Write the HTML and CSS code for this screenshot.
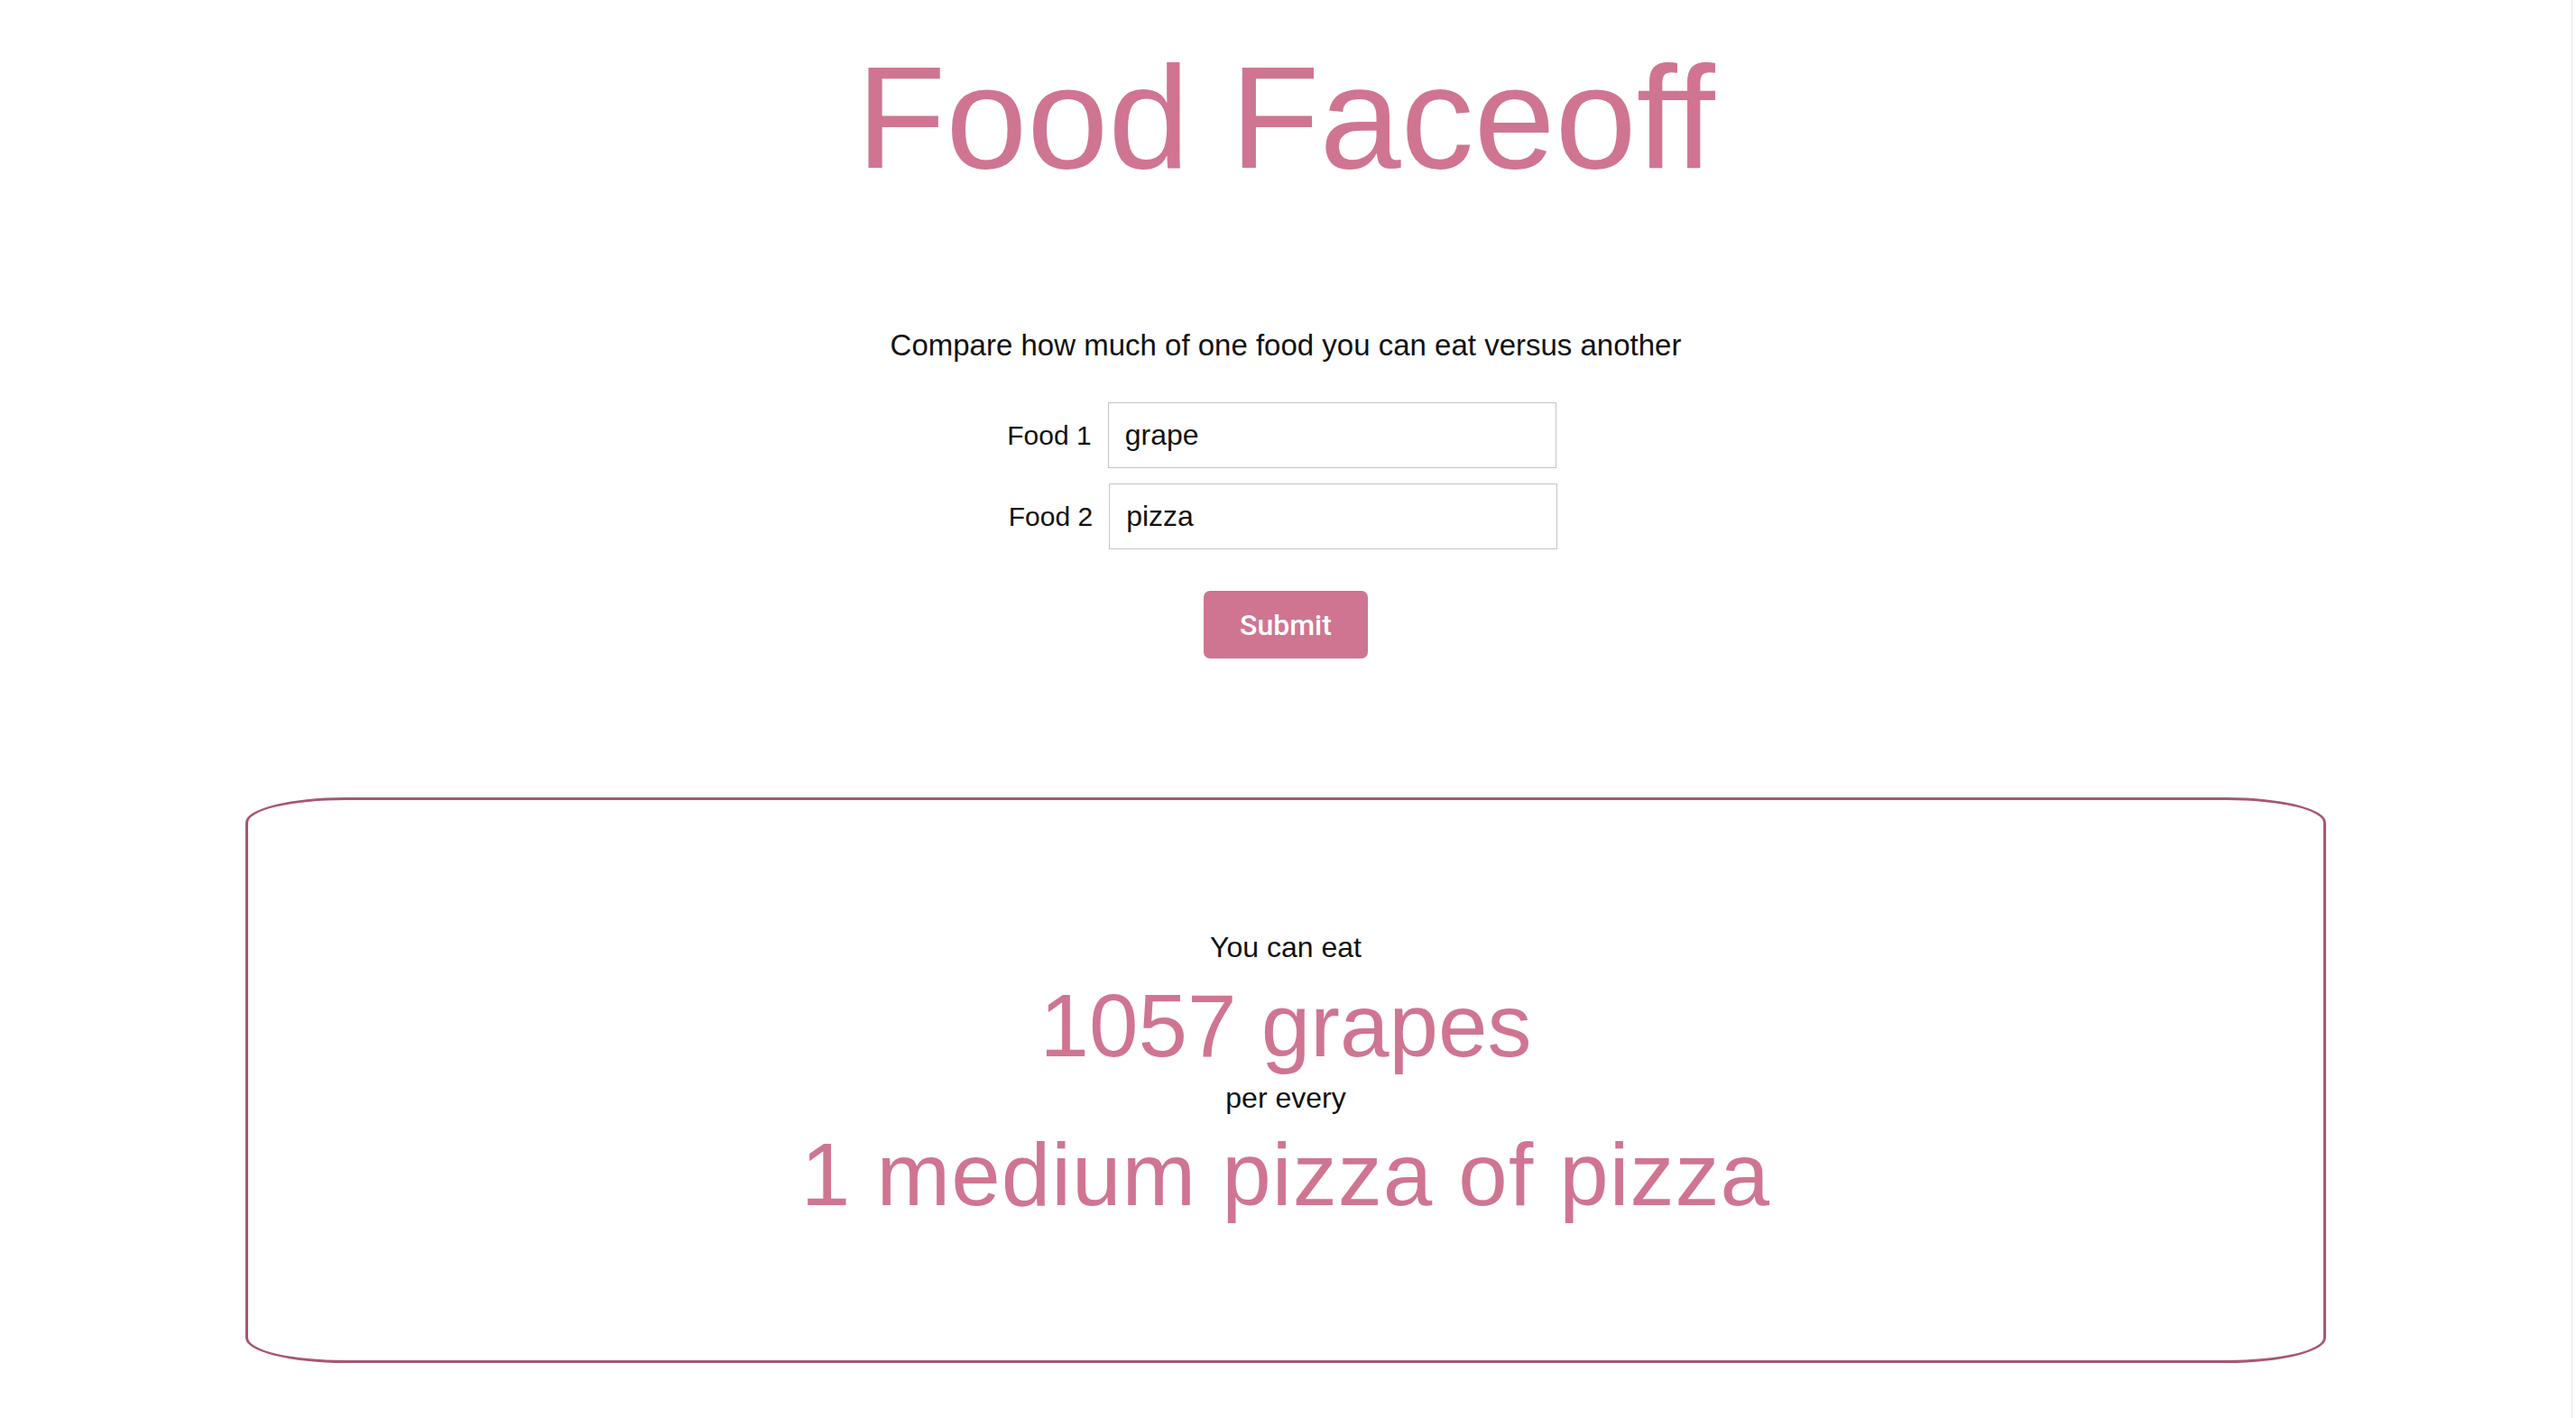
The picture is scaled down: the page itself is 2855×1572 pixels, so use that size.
FILE: index.html
```html
<!DOCTYPE html>
<html lang="en">
<head>
<meta charset="utf-8">
<title>Food Faceoff</title>
<link rel="stylesheet" href="styles.css">
</head>
<body>
<div class="page">
  <main class="main">
    <h1 class="title">Food Faceoff</h1>
    <p class="intro">Compare how much of one food you can eat versus another</p>
    <form class="form">
      <div class="row">
        <label class="label" for="food1">Food 1</label>
        <input class="field" id="food1" type="text" value="grape">
      </div>
      <div class="row row-second">
        <label class="label" for="food2">Food 2</label>
        <input class="field" id="food2" type="text" value="pizza">
      </div>
      <div class="actions">
        <button class="submit" type="button">Submit</button>
      </div>
    </form>
    <section class="result">
      <p class="small">You can eat</p>
      <p class="big big-first">1057 grapes</p>
      <p class="small small-second">per every</p>
      <p class="big big-second">1 medium pizza of pizza</p>
    </section>
  </main>
  <div class="gutter"></div>
</div>
</body>
</html>
```

FILE: styles.css
```css
html, body {
  margin: 0;
  padding: 0;
  background: #ffffff;
}

body {
  font-family: "Liberation Sans", Arial, sans-serif;
  color: #111111;
}

.page {
  display: flex;
  min-height: 1572px;
}

.main {
  flex: 0 0 2850px;
  display: flex;
  flex-direction: column;
  align-items: center;
}

.gutter {
  flex: 1;
  border-left: 1px solid #e4e4e4;
}

.title {
  margin: 50px 0 0;
  font-size: 162px;
  line-height: 160px;
  font-weight: 400;
  color: #cf7591;
  letter-spacing: 0;
}

.intro {
  margin: 153px 0 0;
  font-size: 33px;
  line-height: 40px;
}

.form {
  margin-top: 43px;
  display: flex;
  flex-direction: column;
  align-items: center;
  gap: 17px;
}

.row {
  display: flex;
  align-items: baseline;
  gap: 18px;
  padding-right: 9px;
}

.row-second {
  padding-right: 6px;
}

.label {
  font-size: 30px;
}

.field {
  box-sizing: border-box;
  width: 497px;
  height: 73px;
  border: 1px solid #c4c4c4;
  border-radius: 0;
  padding: 0 18px;
  font-family: "Liberation Sans", Arial, sans-serif;
  font-size: 32px;
  color: #111111;
  outline: none;
}

.actions {
  margin-top: 29px;
}

.submit {
  width: 182px;
  height: 75px;
  border: none;
  border-radius: 7px;
  background: #cf7591;
  color: #ffffff;
  font-family: Roboto, "Liberation Sans", sans-serif;
  font-weight: 500;
  font-size: 32px;
  padding: 0;
}

.result {
  box-sizing: border-box;
  margin-top: 154px;
  width: 2306px;
  height: 627px;
  border: 3px solid #a8566f;
  border-radius: 110px / 28px;
  padding-top: 145px;
  text-align: center;
}

.small {
  margin: 0;
  font-size: 32px;
  line-height: 37px;
}

.big {
  margin: 0;
  font-size: 98px;
  line-height: 98px;
  color: #cf7591;
}

.big-first {
  margin-top: 19px;
}

.small-second {
  margin-top: 13px;
}

.big-second {
  margin-top: 17px;
  letter-spacing: 1px;
}
```
